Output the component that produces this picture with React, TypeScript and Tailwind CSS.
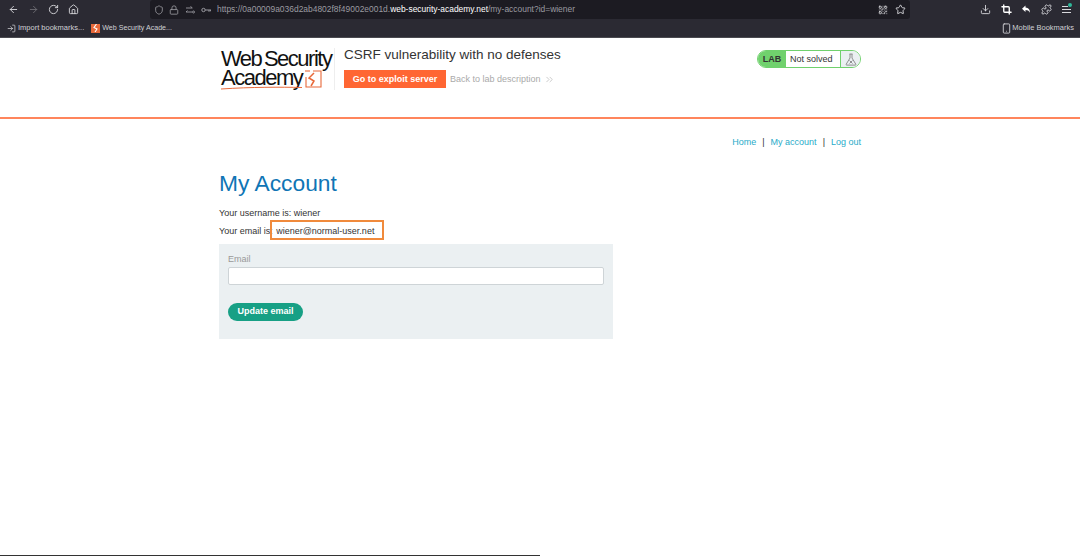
import { ArrowLeft, ArrowRight, RotateCw, Home, Shield, Lock, QrCode, Star, Download, Crop, Puzzle, LogIn, Smartphone, ChevronsRight } from 'lucide-react'

function Logo() {
  return (
    <div className="relative h-[46px] w-[113px] shrink-0 pt-[1px] text-[#111] tracking-[-1.5px] [word-spacing:-2px]">
      <div className="h-[19px] text-[22px] leading-[19px] whitespace-nowrap">Web Security</div>
      <div className="h-[19px] text-[22px] leading-[19px] whitespace-nowrap">Academy</div>
      <svg className="absolute left-[82px] top-[22px]" width="19" height="19" viewBox="0 0 19 19" fill="none">
        <path d="M10 1h8v16H3V7" stroke="#e8693a" strokeWidth="1.1" />
        <path d="M2 1h5" stroke="#e8693a" strokeWidth="1.1" />
        <path d="M11 3 6 8l5 3-3 5" stroke="#e8693a" strokeWidth="1.5" fill="none" />
      </svg>
      <svg className="absolute left-0 top-[38px]" width="82" height="4" viewBox="0 0 82 4" fill="none">
        <path d="M0 3C30 1 60 1 81 1.5" stroke="#e8693a" strokeWidth="1" />
      </svg>
    </div>
  )
}

function FlaskIcon() {
  return (
    <svg width="12" height="13" viewBox="0 0 12 13" fill="none" stroke="#777" strokeWidth="0.8">
      <path d="M4.5 1h3M5 1v4L1.2 11.2c-.3.5 0 .9.5.9h8.6c.5 0 .8-.4.5-.9L7 5V1" />
      <path d="M4.5 7.5l3 3M7.5 7.5l-3 3" />
    </svg>
  )
}

function BrowserBar() {
  return (
    <div className="h-[38px] bg-[#2b2a33] border-b border-[#4a4a50] text-[#d8d8dc]">
      <div className="flex h-[19px] items-center">
        <div className="flex w-[150px] shrink-0 items-center gap-[9px] pl-[8px]">
          <ArrowLeft size={11} />
          <ArrowRight size={11} className="text-[#6c6b72]" />
          <RotateCw size={11} />
          <Home size={11} />
        </div>
        <div className="flex h-[19px] w-[760px] shrink-0 items-center rounded-[3px] bg-[#1c1b22] pl-[4px] text-[8.45px] text-[#9a9aa0]">
          <Shield size={10} />
          <Lock size={10} className="ml-[5px]" />
          <svg width="10" height="10" viewBox="0 0 10 10" fill="none" stroke="currentColor" strokeWidth="0.9" className="ml-[6px]">
            <path d="M1 3h6M5.5 1.5 7.5 3M1 7h6M2.5 5.5 1 7" />
            <circle cx="8.5" cy="7" r="1" />
          </svg>
          <svg width="10" height="10" viewBox="0 0 10 10" fill="none" stroke="currentColor" strokeWidth="1" className="ml-[6px]">
            <circle cx="2.5" cy="5" r="1.7" />
            <path d="M4.2 5H10M8 5v1.8M9.6 5v1.3" />
          </svg>
          <span className="ml-[6px] whitespace-nowrap">
            https://0a00009a036d2ab4802f8f49002e001d.<span className="text-white">web-security-academy.net</span>/my-account?id=wiener
          </span>
          <QrCode size={10} className="ml-auto text-[#d8d8dc]" />
          <Star size={11} className="ml-[7px] mr-[4px] text-[#d8d8dc]" />
        </div>
        <div className="ml-auto flex items-center pr-[9px]">
          <Download size={11} />
          <Crop size={11} strokeWidth={3} className="ml-[10px] text-white" />
          <svg width="11" height="11" viewBox="0 0 11 11" fill="white" className="ml-[9px]">
            <path d="M4.5 1.5 1 4.8l3.5 3.2V6c2 0 3.4.6 4.4 2.8C9 5.5 7.5 3.8 4.5 3.6z" />
          </svg>
          <Puzzle size={11} className="ml-[9px]" />
          <div className="relative ml-[10px] flex h-[9px] w-[9px] flex-col justify-between py-[1px]">
            <div className="h-px w-[6px] bg-[#d8d8dc]" />
            <div className="h-px bg-[#d8d8dc]" />
            <div className="h-px bg-[#d8d8dc]" />
            <div className="absolute -right-[1px] -top-[2px] size-[4px] rounded-full bg-[#2fb89a]" />
          </div>
        </div>
      </div>
      <div className="flex h-[18px] items-center text-[7.5px] text-[#d0d0d4]">
        <LogIn size={9} className="ml-[7px]" />
        <span className="ml-[2px] whitespace-nowrap">Import bookmarks...</span>
        <div className="ml-[7px] flex size-[9px] items-center justify-center bg-[#e8693a]">
          <svg width="7" height="8" viewBox="0 0 7 8" fill="none" stroke="white" strokeWidth="1.1">
            <path d="M4.5 0 2 3.5l3 1.5L3 8" />
          </svg>
        </div>
        <span className="ml-[2px] whitespace-nowrap text-[7.1px]">Web Security Acade...</span>
        <Smartphone size={11} className="ml-auto" />
        <span className="mr-[6px] whitespace-nowrap">Mobile Bookmarks</span>
      </div>
    </div>
  )
}

export default function App() {
  return (
    <div className="relative flex h-[556px] w-[1080px] flex-col overflow-hidden bg-white font-['Liberation_Sans',sans-serif]">
      <BrowserBar />
      <div className="h-[81px] border-b-2 border-[#ff6633]/80">
        <div className="mx-auto flex w-[642px] pl-[2px] pt-[10px]">
          <Logo />
          <div className="h-[42px] border-l border-[#eeeeee]" />
          <div className="ml-[9px] flex-1">
            <div className="text-[13.5px] leading-[14px] text-[#333]">CSRF vulnerability with no defenses</div>
            <div className="mt-[8px] flex items-center">
              <button className="h-[18px] w-[102px] bg-[#ff6633] pt-[1px] text-[9px] font-bold text-white">Go to exploit server</button>
              <span className="ml-[4px] pt-[1px] text-[9px] text-[#aaa]">Back to lab description</span>
              <ChevronsRight size={11} strokeWidth={1.3} className="ml-[3px] text-[#aaa]" />
            </div>
          </div>
          <div className="mt-[2px] flex h-[18px] w-[104px] items-stretch rounded-full border border-[#70d16d] bg-white pt-0 text-[9px]">
            <div className="flex w-[28px] items-center justify-center rounded-l-full bg-[#70d16d] pt-[1px] font-bold text-[#333]">LAB</div>
            <div className="flex flex-1 items-center pl-[4px] pt-[1px] text-[#333]">Not solved</div>
            <div className="flex w-[20px] items-center justify-center rounded-r-full border-l border-[#70d16d] bg-[#ebf0f2]">
              <FlaskIcon />
            </div>
          </div>
        </div>
      </div>
      <div className="mx-auto w-[642px] pt-[17px] text-[9px] text-[#333]">
        <div className="flex justify-end gap-[6px] text-[#29abc9]">
          <span>Home</span>
          <span className="text-[#333]">|</span>
          <span>My account</span>
          <span className="text-[#333]">|</span>
          <span>Log out</span>
        </div>
        <h1 className="mt-[20px] text-[22.8px] leading-[27px] text-[#0f75b5]">My Account</h1>
        <p className="mt-[11px] leading-[11px]">Your username is: wiener</p>
        <div className="relative mt-[7px] h-[11px] leading-[11px]">
          Your email is: <span className="ml-[1px]">wiener@normal-user.net</span>
          <div className="absolute left-[51px] -top-[6px] h-[20px] w-[114px] border-2 border-[#f08a3c]" />
        </div>
        <form className="mt-[7px] h-[95px] w-[394px] bg-[#ebf0f2] px-[9px] pt-[10px]">
          <label className="block text-[9px] leading-[11px] text-[#999]">Email</label>
          <input className="mt-[2px] block h-[18px] w-[376px] rounded-[2px] border border-[#ced4d7] bg-white" />
          <button type="button" className="mt-[18px] h-[18px] w-[75px] rounded-full bg-[#17a085] text-[9px] font-bold text-white">Update email</button>
        </form>
      </div>
      <div className="absolute bottom-0 left-0 h-px w-[540px] bg-[#333]" />
    </div>
  )
}
